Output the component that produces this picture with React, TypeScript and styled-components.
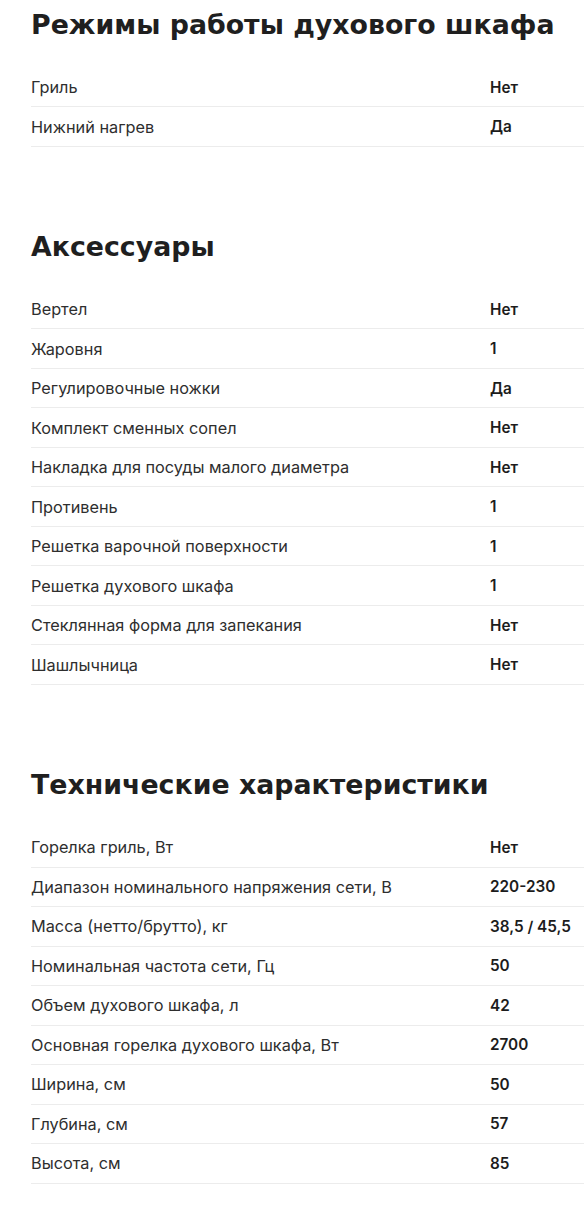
import React from "react";
import styled, { createGlobalStyle } from "styled-components";

const GlobalStyle = createGlobalStyle`
  html, body {
    margin: 0;
    padding: 0;
    background: #ffffff;
  }
  body {
    font-family: "Inter", "Noto Sans", sans-serif;
    color: #222222;
  }
`;

const Page = styled.main`
  padding: 8.6px 0 0 31px;
  display: flex;
  flex-direction: column;
  gap: 84px;
`;

const Section = styled.section`
  display: flex;
  flex-direction: column;
  gap: 27.2px;
`;

const Heading = styled.h2`
  margin: 0;
  font-family: "DejaVu Sans", sans-serif;
  font-weight: 700;
  font-size: 26.8px;
  line-height: 32px;
  color: #1f1f1f;
  letter-spacing: 0;
  white-space: nowrap;
`;

const List = styled.dl`
  margin: 0;
  display: flex;
  flex-direction: column;
`;

const Row = styled.div`
  box-sizing: border-box;
  height: 39.5px;
  display: grid;
  grid-template-columns: 459px 1fr;
  align-items: center;
  border-bottom: 1px solid #ececec;
`;

const Label = styled.dt`
  margin: 0;
  font-family: "Inter", sans-serif;
  font-size: 16.3px;
  font-weight: 400;
  color: #2e2e2e;
  white-space: nowrap;
`;

const Value = styled.dd`
  margin: 0;
  font-family: "Inter", sans-serif;
  font-size: 15.3px;
  font-weight: 600;
  color: #1c1c1c;
  white-space: nowrap;
`;

type Spec = [string, string];

const sections: { title: string; items: Spec[] }[] = [
  {
    title: "Режимы работы духового шкафа",
    items: [
      ["Гриль", "Нет"],
      ["Нижний нагрев", "Да"],
    ],
  },
  {
    title: "Аксессуары",
    items: [
      ["Вертел", "Нет"],
      ["Жаровня", "1"],
      ["Регулировочные ножки", "Да"],
      ["Комплект сменных сопел", "Нет"],
      ["Накладка для посуды малого диаметра", "Нет"],
      ["Противень", "1"],
      ["Решетка варочной поверхности", "1"],
      ["Решетка духового шкафа", "1"],
      ["Стеклянная форма для запекания", "Нет"],
      ["Шашлычница", "Нет"],
    ],
  },
  {
    title: "Технические характеристики",
    items: [
      ["Горелка гриль, Вт", "Нет"],
      ["Диапазон номинального напряжения сети, В", "220-230"],
      ["Масса (нетто/брутто), кг", "38,5 / 45,5"],
      ["Номинальная частота сети, Гц", "50"],
      ["Объем духового шкафа, л", "42"],
      ["Основная горелка духового шкафа, Вт", "2700"],
      ["Ширина, см", "50"],
      ["Глубина, см", "57"],
      ["Высота, см", "85"],
    ],
  },
];

export default function App() {
  return (
    <>
      <GlobalStyle />
      <Page>
        {sections.map((s) => (
          <Section key={s.title}>
            <Heading>{s.title}</Heading>
            <List>
              {s.items.map(([k, v]) => (
                <Row key={k}>
                  <Label>{k}</Label>
                  <Value>{v}</Value>
                </Row>
              ))}
            </List>
          </Section>
        ))}
      </Page>
    </>
  );
}
